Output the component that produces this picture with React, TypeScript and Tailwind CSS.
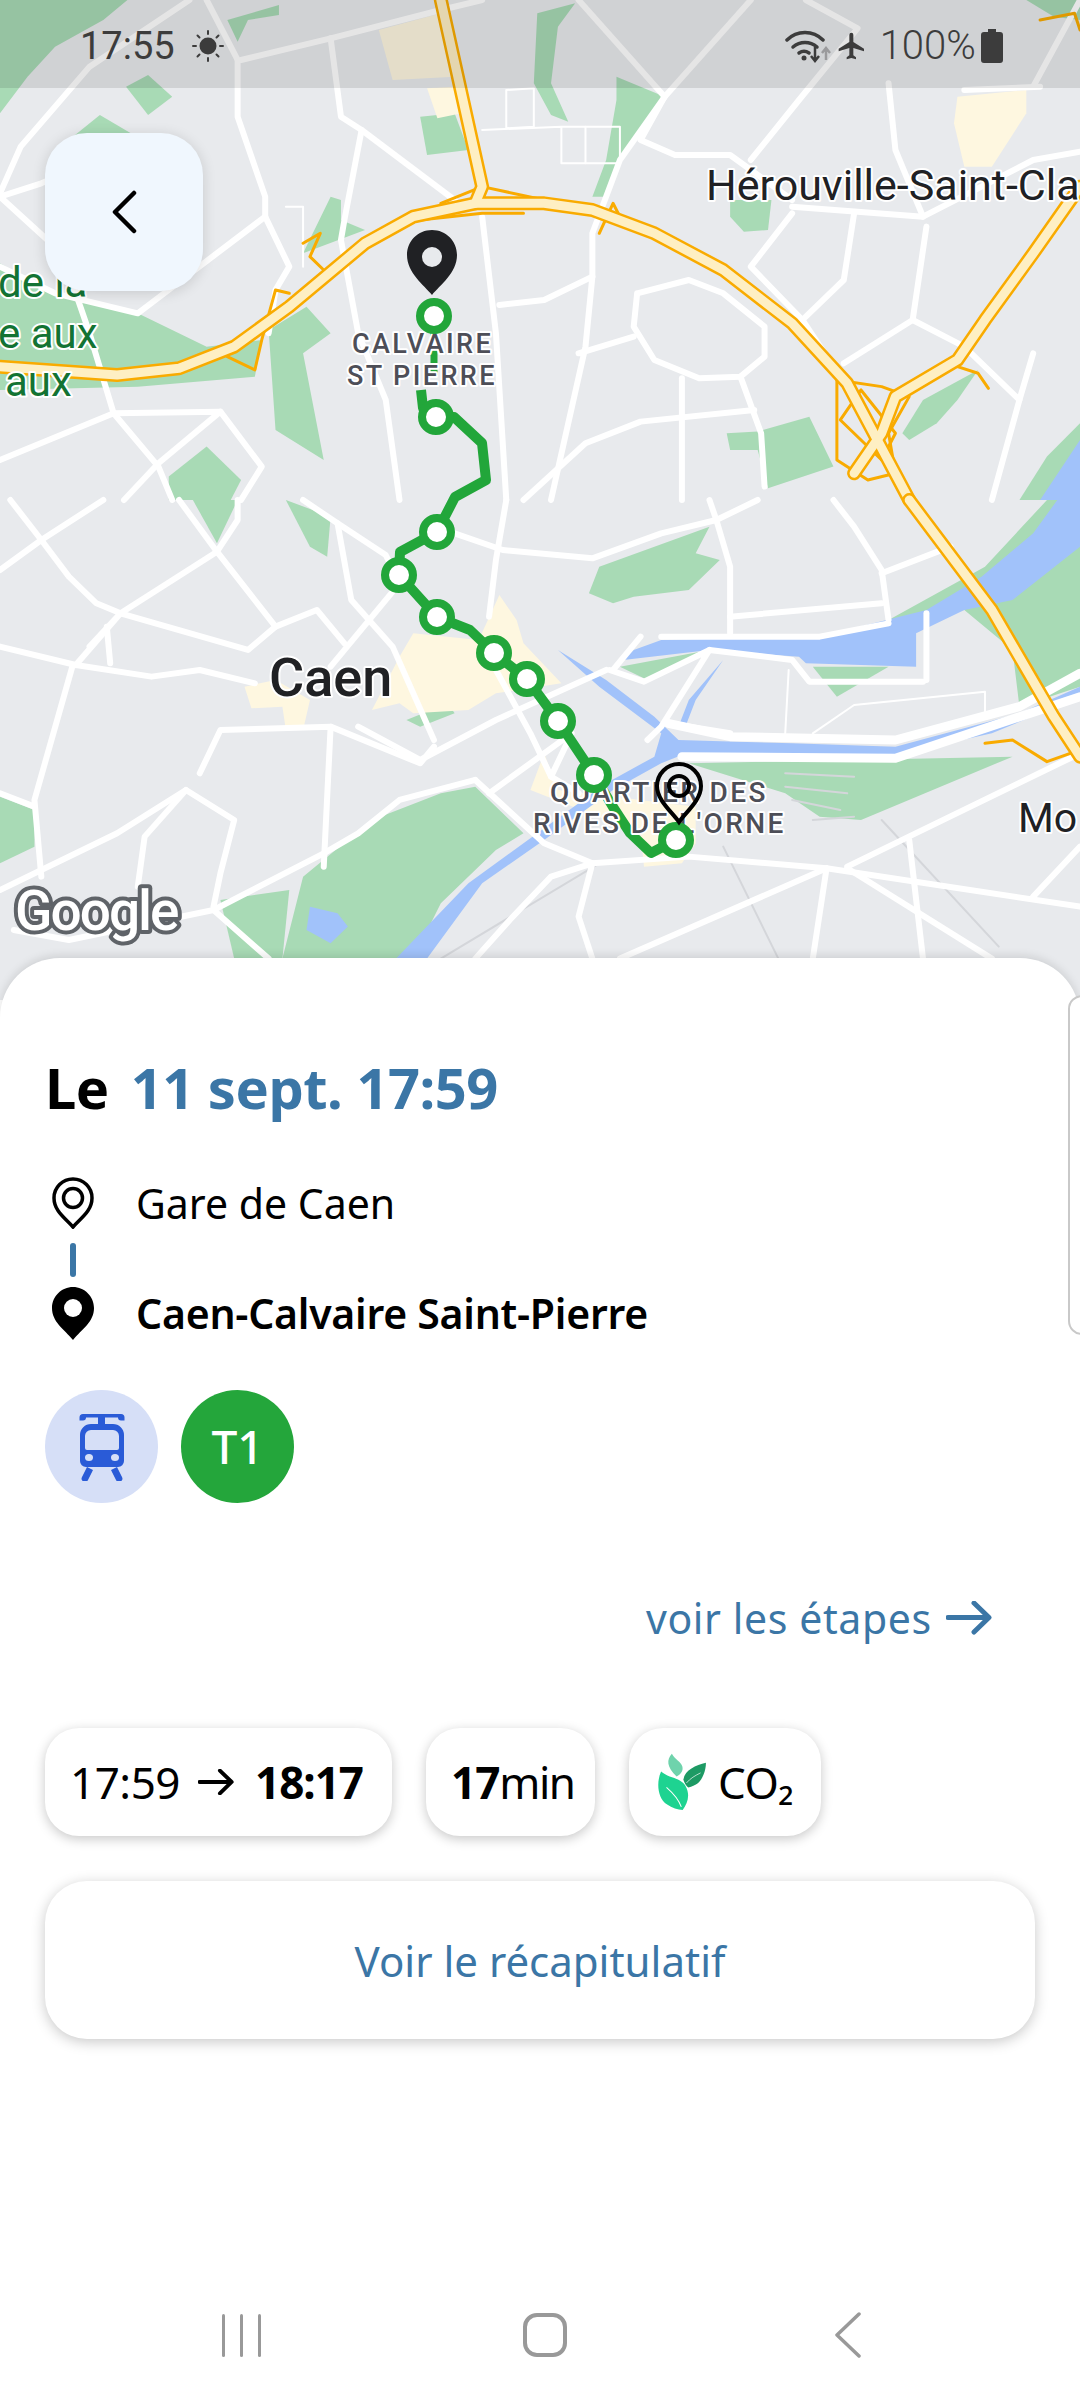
import React from "react";

const FONT = "font-['Noto_Sans',sans-serif]";

// map traces, in the x/1.452 y/3 grid used when reading the map
const top = {
  green: [
    "0,0 185,0 150,60 80,140 40,230 0,340",
    "330,60 405,15 405,45 360,60 345,125",
    "183,260 215,225 250,290 215,345",
    "145,345 190,400 100,420",
    "0,790 60,860 200,940 300,1040 380,1020 370,1130 200,1160 0,1170",
    "610,350 660,340 680,450 620,465",
    "780,40 835,10 810,80 800,250 825,365 800,345 775,250",
    "895,300 895,230 965,290 900,480 880,590 860,590 880,480",
    "480,590 495,600 495,660 530,690 440,760",
    "1060,600 1120,600 1115,690 1080,695 1060,650",
    "390,990 445,920 480,1000 440,1060 470,1380 400,1290",
    "1055,1300 1100,1295 1175,1250 1210,1400 1115,1465 1100,1350 1060,1350",
    "1310,1300 1340,1200 1420,1110 1390,1200 1360,1270 1320,1320",
    "245,1430 300,1340 350,1440 335,1500 245,1500",
    "1480,1500 1520,1370 1568,1270 1568,1500",
    "1490,0 1530,50 1568,60 1568,0",
  ],
  yellow: [
    "550,90 640,40 660,230 570,240",
    "620,265 660,260 670,340 635,355",
    "1390,290 1490,270 1490,340 1440,500 1400,500 1385,370",
  ],
  roads: [
    "350,180 480,115 640,30 700,0",
    "480,115 495,350 525,390 660,600",
    "345,180 345,350 385,590 385,650 420,800 400,870 390,1000",
    "300,0 345,180",
    "840,0 965,290 900,480 860,700 860,830 850,1040 800,1500",
    "1090,0 965,290",
    "965,290 930,420 980,465 1060,465 1150,600",
    "1170,0 1245,85 1160,300 1090,480",
    "275,0 130,200 30,440 0,580",
    "385,650 200,940 80,880 0,800",
    "0,590 90,760 130,1000 165,1240 230,1400 250,1500",
    "165,1240 0,1380",
    "165,1240 320,1235 380,1400 350,1500",
    "320,1235 230,1390 180,1500",
    "525,390 500,660 495,720 520,1000 560,1200 580,1500",
    "700,650 720,1000 735,1500",
    "860,830 790,900 725,915",
    "925,880 1000,840 1050,880 1110,980 1110,1070 1075,1130 1015,1135 950,1080 920,980 925,880",
    "990,1135 990,1500",
    "1075,1130 1105,1300 1110,1460",
    "1095,1230 930,1265 850,1330 760,1500",
    "1240,640 1225,840 1165,960 1210,1100",
    "1325,960 1225,1090",
    "1345,680 1325,960 1400,1040 1480,1200 1500,1060",
    "1480,1200 1440,1500",
    "1165,960 1090,800 1150,640",
    "1150,620 1340,650 1500,480 1568,455",
    "840,1060 920,1010",
    "0,590 60,550 130,490",
    "1290,250 1300,450 1340,650",
    "1400,270 1510,260",
    "1500,260 1568,0",
  ],
  thin: [
    "700,390 815,380 815,490 900,490 900,380 815,380",
    "735,270 775,265 775,380 735,385 735,270",
    "850,380 850,490",
    "415,620 440,620 440,800",
  ],
  highway: [
    "0,1100 170,1125 260,1105 340,1040 420,920 530,730 600,650 690,610 790,610 860,630 950,700 1050,810 1150,970 1230,1150 1320,1500",
    "640,0 700,560 690,610",
    "1568,560 1500,760 1430,960 1390,1080 1300,1190 1280,1300 1240,1420",
  ],
  ramps: [
    "1215,1140 1280,1160 1320,1190 1290,1300 1300,1420 1260,1440 1215,1380 1215,1260 1215,1140",
    "1250,1170 1220,1260 1280,1380 1300,1300 1250,1170",
    "640,610 700,560 790,600",
    "610,660 700,640 760,640",
    "870,700 890,610 900,650",
    "330,1070 370,1110 380,1020 400,870 420,880",
    "440,730 465,700 450,770 470,810",
    "1390,1100 1420,1120 1435,1165",
    "1510,60 1560,40 1568,90",
  ],
};

const bottom = {
  green: [
    "280,0 345,0 315,130",
    "415,0 480,50 475,170 450,140",
    "870,200 1030,80 1010,160 1045,180 1000,270 920,290 890,310 855,280",
    "1290,360 1430,200 1520,0 1568,0 1568,560 1480,620 1470,450 1400,330 1345,340",
    "1180,500 1290,500 1215,590",
    "1000,790 1470,770 1250,960 1190,950 1140,880",
    "0,890 50,930 50,1040 0,1090",
    "440,1130 540,960 640,880 690,860 760,1000 720,1050 640,1210 600,1376 410,1376",
    "320,1200 420,1170 410,1376 340,1376",
    "900,500 1030,450 940,540",
    "590,660 650,610 660,640 610,680",
  ],
  yellow: [
    "540,630 580,470 600,400 695,420 725,285 750,360 760,430 815,550 720,580 680,630 600,640 580,610",
    "355,560 400,540 450,600 440,690 415,690 410,620 365,625",
    "790,760 810,870 1010,920 1010,1030 990,1090 935,1100 930,1000 770,870",
  ],
  water: [
    "1535,0 1500,100 1425,230 1345,330 1190,410 960,420 920,450 905,480 1030,450 1160,470 1170,490 1330,500 1330,400 1400,330 1470,300 1568,140 1568,0",
    "810,450 880,540 950,650 985,720 1150,730 1300,740 1480,640 1568,560 1568,590 1440,700 1300,765 990,765 960,790 890,870 790,1020 700,1150 620,1376 575,1376 680,1150 780,1000 880,850 950,770 960,700 870,560",
    "1050,480 1000,600 985,680 995,680 1010,600",
    "450,1220 490,1240 505,1280 480,1330 445,1290",
  ],
  roads: [
    "0,440 110,495 220,530 290,510 370,550",
    "105,500 50,900 60,1130",
    "0,880 50,920",
    "0,210 60,120 150,0",
    "60,120 100,230 140,310 175,340",
    "15,0 60,120",
    "175,340 315,155 345,60 345,0",
    "315,155 400,380 360,450 175,340",
    "130,440 175,340 110,495",
    "155,380 160,490",
    "315,155 260,0",
    "440,0 490,70 560,165 580,250 480,500",
    "490,70 510,300 570,440 630,720",
    "660,100 730,150 860,175 960,100 1040,60 1100,0",
    "735,0 720,180 710,350",
    "1030,0 1040,60 1060,200 1060,400",
    "1210,0 1240,80 1280,210 1290,360",
    "1060,350 1280,310",
    "1280,220 1380,140",
    "960,410 1190,410 1290,370",
    "890,510 930,410",
    "885,510 935,545 1030,450 960,680 940,720",
    "1030,450 1150,480 1175,545 1340,545",
    "1345,340 1345,540",
    "400,380 460,330 500,430",
    "290,820 320,690 480,680 610,790 630,740",
    "480,680 470,1100",
    "0,1170 170,1000 270,870 340,960 320,1120 310,1220",
    "270,870 210,1010 200,1160",
    "520,680 610,780 720,660 880,510",
    "690,840 580,900 520,1000 470,1060 310,1230 100,1320 20,1290",
    "690,840 790,1030 860,1090 1000,1070 1200,1105 1568,1220",
    "1200,1105 900,1376",
    "1230,1100 1568,760",
    "1200,1105 1180,1376",
    "1230,1105 1440,1376",
    "860,1090 840,1250 860,1376",
    "1320,1020 1340,1376",
    "1500,1190 1568,1040",
    "710,880 830,700 800,830",
    "720,510 770,700 800,830 840,880",
    "310,1230 390,1376",
    "860,1090 800,1130 740,1260 690,1376",
    "970,670 1060,700",
  ],
  riverRoads: [
    "970,670 1060,710 1300,720 1480,620 1568,520",
    "990,770 1300,775 1568,590",
  ],
  thin: [
    "1180,700 1240,615 1430,575 1430,640",
    "1145,510 1140,700",
    "1030,450 1150,480",
  ],
  rail: [
    "870,1090 640,1376",
    "1050,1040 1130,1376",
    "1280,960 1450,1340",
    "1140,820 1240,830",
    "1140,860 1230,880",
    "1150,900 1220,930",
    "1180,960 1240,950",
  ],
  highway: ["1320,0 1440,330 1530,650 1568,770"],
  ramps: ["1430,730 1470,720 1520,785 1568,750"],
};

const routeA = "421,390 423,408 436,417 454,417 482,443 486,480 455,497 437,532 400,552 399,575 437,617 470,630 494,653 527,679 558,721 594,775 613,807 630,833 651,853 676,840";
const stops = [
  [434, 316],
  [436, 417],
  [437, 532],
  [399, 575],
  [437, 617],
  [494, 653],
  [527, 679],
  [558, 721],
  [594, 775],
  [676, 840],
];

const Lines = ({ list, color, width }: { list: string[]; color: string; width: number }) => (
  <>
    {list.map((p) => (
      <polyline
        key={p}
        points={p}
        fill="none"
        stroke={color}
        strokeWidth={width}
        strokeLinejoin="round"
        strokeLinecap="round"
        vectorEffect="non-scaling-stroke"
      />
    ))}
  </>
);

const Fill = ({ list, color }: { list: string[]; color: string }) => (
  <>
    {list.map((p) => (
      <polygon key={p} points={p} fill={color} />
    ))}
  </>
);

const MapLabel = ({
  x,
  y,
  size,
  color,
  weight = 500,
  spacing = 0,
  children,
}: {
  x: number;
  y: number;
  size: number;
  color: string;
  weight?: number;
  spacing?: number;
  children: React.ReactNode;
}) => (
  <text
    x={x}
    y={y}
    fontFamily="Roboto, sans-serif"
    fontSize={size}
    fontWeight={weight}
    letterSpacing={spacing}
    fill={color}
    stroke="#ffffff"
    strokeWidth={4}
    strokeLinejoin="round"
    paintOrder="stroke"
  >
    {children}
  </text>
);

const MapCanvas = () => (
  <svg className="block w-[1080px] h-[1000px]" viewBox="0 0 1080 1000">
    <rect width="1080" height="1000" fill="#e8eaed" />
    <g transform="scale(0.6888 0.3333)">
      <Fill list={top.green} color="#a8dab5" />
      <Fill list={top.yellow} color="#fef7e0" />
      <polygon points="1510,1500 1568,1320 1568,1500" fill="#a1c2fa" />
      <Lines list={top.thin} color="#ffffff" width={2} />
      <Lines list={top.roads} color="#ffffff" width={6} />
      <Lines list={top.ramps} color="#f9ab00" width={3} />
      <Lines list={top.highway} color="#f9ab00" width={14} />
      <Lines list={top.highway} color="#feefc3" width={9} />
    </g>
    <g transform="translate(0 500) scale(0.6888 0.3333)">
      <Fill list={bottom.green} color="#a8dab5" />
      <Fill list={bottom.yellow} color="#fef7e0" />
      <Fill list={bottom.water} color="#a1c2fa" />
      <Lines list={bottom.rail} color="#d4d6da" width={2} />
      <Lines list={bottom.thin} color="#ffffff" width={2} />
      <Lines list={bottom.roads} color="#ffffff" width={6} />
      <Lines list={bottom.riverRoads} color="#ffffff" width={9} />
      <Lines list={bottom.ramps} color="#f9ab00" width={3} />
      <Lines list={bottom.highway} color="#f9ab00" width={14} />
      <Lines list={bottom.highway} color="#feefc3" width={9} />
    </g>

    <polyline points={routeA} fill="none" stroke="#22a63a" strokeWidth={10} strokeLinejoin="round" />
    <line x1="434" y1="316" x2="434" y2="375" stroke="#22a63a" strokeWidth={7} />

    <MapLabel x={-2} y={297} size={42} color="#137333" weight={400}>de la</MapLabel>
    <MapLabel x={-2} y={348} size={42} color="#137333" weight={400}>e aux</MapLabel>
    <MapLabel x={5} y={396} size={42} color="#137333" weight={400}>aux</MapLabel>
    <MapLabel x={706} y={200} size={43} color="#202124" weight={400}>Hérouville-Saint-Cla</MapLabel>
    <MapLabel x={1018} y={832} size={41} color="#202124" weight={400}>Mo</MapLabel>
    <MapLabel x={269} y={696} size={54} color="#202124">Caen</MapLabel>
    <MapLabel x={352} y={353} size={27} color="#4d4e57" spacing={2.4}>CALVAIRE</MapLabel>
    <MapLabel x={347} y={385} size={27} color="#4d4e57" spacing={2.4}>ST PIERRE</MapLabel>
    <MapLabel x={550} y={802} size={28} color="#4d4e57" spacing={2.4}>QUARTIER DES</MapLabel>
    <MapLabel x={533} y={833} size={28} color="#4d4e57" spacing={2.4}>RIVES DE L'ORNE</MapLabel>

    {stops.map(([x, y]) => (
      <circle key={y} cx={x} cy={y} r={14} fill="#ffffff" stroke="#22a63a" strokeWidth={8} />
    ))}

    {/* arrival pin */}
    <path
      d="M432 230c-14 0-25 11-25 25 0 18 17 30 25 40 8-10 25-22 25-40 0-14-11-25-25-25z"
      fill="#202124"
    />
    <ellipse cx="432" cy="257" rx="10" ry="10" fill="#e8eaed" />
    {/* departure pin */}
    <path
      d="M679 764c-12 0-22 10-22 22 0 14 14 25 22 36 8-11 22-22 22-36 0-12-10-22-22-22z"
      fill="none"
      stroke="#000000"
      strokeWidth={4}
    />
    <circle cx="679" cy="786" r="10" fill="none" stroke="#000000" strokeWidth={4} />

    <text
      x={15}
      y={930}
      fontFamily="Roboto, sans-serif"
      fontSize={55}
      fontWeight={500}
      letterSpacing={-2}
      fill="#ffffff"
      stroke="#5f6368"
      strokeWidth={8}
      strokeLinejoin="round"
      paintOrder="stroke"
    >
      Google
    </text>
  </svg>
);

const StatusBar = () => (
  <div className="absolute top-0 left-0 w-full h-[88px] bg-black/10 flex items-center pl-[80px] pt-[4px] text-[#3c3c3c] font-['Roboto',sans-serif] text-[38px]">
    <span className="leading-none">17:55</span>
    <svg className="ml-[16px]" width="34" height="34" viewBox="0 0 34 34">
      <circle cx="17" cy="17" r="8.5" fill="#3c3c3c" />
      <g stroke="#3c3c3c" strokeWidth="2" strokeLinecap="round">
        <path d="M17 2v3M17 29v3M2 17h3M29 17h3M6.500 6.500l2 2M25.500 25.500l2 2M6.500 27.500l2-2M25.500 8.500l2-2" />
      </g>
    </svg>
    <svg className="ml-[560px]" width="50" height="34" viewBox="0 0 50 34">
      <g fill="none" stroke="#3c3c3c" strokeWidth="3.500" strokeLinecap="round">
        <path d="M2 11c10-10 26-10 36 0" />
        <path d="M8 18c7-6 17-6 24 0" />
        <path d="M14 24c3-2 7-2 10 0" />
      </g>
      <circle cx="19" cy="29" r="2.500" fill="#3c3c3c" />
      <path d="M30 18v13M26 27l4 5 4-5" fill="none" stroke="#3c3c3c" strokeWidth="2.500" />
      <path d="M41 31V20M37 24l4-5 4 5" fill="none" stroke="#9a9a9c" strokeWidth="2.500" />
    </svg>
    <svg className="ml-[1px]" width="32" height="32" viewBox="0 0 24 24" fill="#3c3c3c">
      <path d="M21 16v-2l-8-5V3.500a1.500 1.500 0 0 0-3 0V9l-8 5v2l8-2.500V19l-2 1.500V22l3.500-1 3.500 1v-1.500L13 19v-5.500z" />
    </svg>
    <span className="ml-[12px] leading-none text-[40px] font-light">100%</span>
    <svg className="ml-[5px]" width="22" height="34" viewBox="0 0 22 34" fill="#3c3c3c">
      <path d="M7 0h8v3h4a3 3 0 0 1 3 3v25a3 3 0 0 1-3 3H3a3 3 0 0 1-3-3V6a3 3 0 0 1 3-3h4z" />
    </svg>
  </div>
);

const TramIcon = () => (
  <svg width="46" height="68" viewBox="0 0 46 68">
    <g fill="#2a5bd7">
      <path d="M4 1h38a3.500 3.500 0 0 1 3.500 3.500v3h-3.500a3 3 0 0 1-3-3h-13v7h-7v-7H7a3 3 0 0 1-3 3H.500v-3A3.500 3.500 0 0 1 4 1z" />
      <path
        fillRule="evenodd"
        d="M12 11h22a11 11 0 0 1 11 11v26a6 6 0 0 1-6 6H7a6 6 0 0 1-6-6V22a11 11 0 0 1 11-11zm0 6a6 6 0 0 0-6 6v12a2 2 0 0 0 2 2h30a2 2 0 0 0 2-2V23a6 6 0 0 0-6-6z"
      />
      <path d="M8 54l6 3-5 10a3 3 0 0 1-6-3zM38 54l-6 3 5 10a3 3 0 0 0 6-3z" />
    </g>
    <ellipse cx="10" cy="44.500" rx="4" ry="3.500" fill="#d6dff7" />
    <ellipse cx="36" cy="44.500" rx="4" ry="3.500" fill="#d6dff7" />
  </svg>
);

const LeafIcon = () => (
  <svg width="52" height="58" viewBox="105 103 148 172">
    <path d="M117 158c-14 30-12 78 18 98 14 10 32 16 46 16 14-20 24-44 8-72-14-24-50-22-72-42z" fill="#1ed391" />
    <path d="M133 205c16 14 34 30 44 58" fill="none" stroke="#ffffff" strokeWidth="3" />
    <path d="M149 105c-16 18-16 38 14 68 14-8 20-18 17-30-4-16-22-20-31-38z" fill="#6fd3ac" />
    <path d="M250 132c-30 8-62 20-67 50 4 12 10 20 15 23 28-6 38-20 45-38 4-10 7-22 7-35z" fill="#1d9a64" />
    <path d="M192 192c12-14 26-22 42-30" fill="none" stroke="#ffffff" strokeWidth="2" />
  </svg>
);

const ArrowIcon = ({ className, color, w }: { className?: string; color: string; w: number }) => (
  <svg className={className} width={w} height={w * 0.72} viewBox="0 0 46 33" fill="none">
    <path d="M2 16.500h40M28 2l15 14.500L28 31" stroke={color} strokeWidth="5" strokeLinecap="round" strokeLinejoin="round" />
  </svg>
);

const Pill = ({ className, children }: { className: string; children: React.ReactNode }) => (
  <div className={`h-[108px] rounded-[34px] bg-white shadow-[0_3px_12px_rgba(0,0,0,0.22)] flex items-center ${className}`}>
    {children}
  </div>
);

const App = () => {
  return (
    <div className={`relative w-[1080px] h-[2400px] overflow-hidden bg-white flex flex-col ${FONT}`}>
      <div className="relative h-[1000px] shrink-0">
        <MapCanvas />
        <StatusBar />
        <button className="absolute left-[45px] top-[133px] w-[158px] h-[158px] rounded-[42px] bg-[#f0f7fe] shadow-[0_2px_14px_rgba(0,0,0,0.14)] flex items-center justify-center">
          <svg width="28" height="44" viewBox="0 0 28 44" fill="none">
            <path d="M24 3L5 22l19 19" stroke="#000000" strokeWidth="4.500" strokeLinecap="round" strokeLinejoin="round" />
          </svg>
        </button>
      </div>

      <div className="relative -mt-[42px] flex-1 rounded-t-[60px] bg-white shadow-[0_-2px_10px_rgba(0,0,0,0.12)] flex flex-col">
        <div className="absolute right-[-40px] top-[37px] w-[52px] h-[340px] rounded-[14px] border-2 border-[#c9c9c9] bg-white" />

        <div className="pl-[45px] pt-[92px] flex items-baseline text-[56px] leading-[74px] font-bold tracking-[-0.5px]">
          <span className="text-black">Le</span>
          <span className="ml-[22px] text-[#3b76a6]">11 sept. 17:59</span>
        </div>

        <div className="mt-[53px] ml-[52px] flex items-center h-[52px]">
          <svg width="42" height="52" viewBox="0 0 42 52" fill="none">
            <path d="M21 2C10.500 2 2 10.500 2 21c0 13 11 20 19 29 8-9 19-16 19-29C40 10.500 31.500 2 21 2z" stroke="#000000" strokeWidth="3.500" />
            <circle cx="21" cy="21" r="9.500" stroke="#000000" strokeWidth="3.500" />
          </svg>
          <span className="ml-[42px] text-[41px] leading-none text-black">Gare de Caen</span>
        </div>
        <div className="ml-[70px] mt-[14px] w-[6px] h-[34px] rounded-full bg-[#3b76a6]" />
        <div className="mt-[10px] ml-[52px] flex items-center h-[53px]">
          <svg width="42" height="53" viewBox="0 0 42 53">
            <path d="M21 0C9.500 0 0 9.500 0 21c0 14 12 21 21 32 9-11 21-18 21-32C42 9.500 32.500 0 21 0z" fill="#000000" />
            <circle cx="21" cy="21" r="9" fill="#ffffff" />
          </svg>
          <span className="ml-[42px] text-[41px] leading-none font-semibold text-black tracking-[-0.25px]">Caen-Calvaire Saint-Pierre</span>
        </div>

        <div className="mt-[50px] ml-[45px] flex gap-[23px]">
          <div className="w-[113px] h-[113px] rounded-full bg-[#d6dff7] flex items-center justify-center">
            <TramIcon />
          </div>
          <div className="w-[113px] h-[113px] rounded-full bg-[#24a63b] flex items-center justify-center text-white text-[46px] font-medium">
            T1
          </div>
        </div>

        <div className="mt-[87px] ml-[646px] flex items-center text-[41px] leading-[56px] text-[#3b76a6] tracking-[0.6px]">
          <span>voir les étapes</span>
          <ArrowIcon className="ml-[14px]" color="#3b76a6" w={46} />
        </div>

        <div className="mt-[82px] ml-[45px] flex gap-[34px] text-[44px] text-black">
          <Pill className="w-[347px] pl-[25px]">
            <span className="tracking-[-0.5px]">17:59</span>
            <ArrowIcon className="ml-[18px]" color="#000000" w={36} />
            <span className="ml-[21px] font-bold tracking-[-1px]">18:17</span>
          </Pill>
          <Pill className="w-[169px] pl-[25px]">
            <span className="font-bold tracking-[-1px]">17</span>
            <span className="tracking-[-1.5px]">min</span>
          </Pill>
          <Pill className="w-[192px] pl-[27px]">
            <LeafIcon />
            <span className="ml-[10px] tracking-[-0.5px]">CO₂</span>
          </Pill>
        </div>

        <button className="mt-[45px] ml-[45px] w-[990px] h-[158px] rounded-[42px] bg-white shadow-[0_3px_14px_rgba(0,0,0,0.22)] text-[42px] text-[#3b76a6]">
          Voir le récapitulatif
        </button>

        <div className="mt-auto mb-[42px] pl-[90px] flex h-[46px]">
          <div className="w-[303px] flex items-center justify-center gap-[15px]">
            <div className="w-[3px] h-[43px] bg-[#999999] rounded-full" />
            <div className="w-[3px] h-[43px] bg-[#999999] rounded-full" />
            <div className="w-[3px] h-[43px] bg-[#999999] rounded-full" />
          </div>
          <div className="w-[303px] flex items-center justify-center">
            <div className="w-[44px] h-[44px] rounded-[14px] border-[4px] border-[#999999]" />
          </div>
          <div className="w-[303px] flex items-center justify-center">
            <svg width="26" height="46" viewBox="0 0 26 46" fill="none">
              <path d="M24 2L2 23l22 21" stroke="#999999" strokeWidth="3.500" strokeLinecap="round" strokeLinejoin="round" />
            </svg>
          </div>
        </div>
      </div>
    </div>
  );
};

export default App;
